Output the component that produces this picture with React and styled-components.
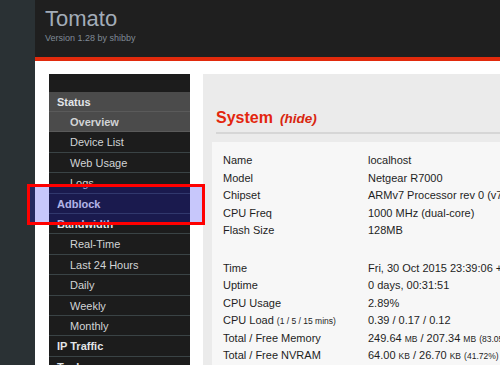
import React from "react";
import styled, { createGlobalStyle } from "styled-components";

const GlobalStyle = createGlobalStyle`
  html, body {
    margin: 0;
    padding: 0;
    background: #fff;
  }
  body {
    font-family: "Liberation Sans", Arial, sans-serif;
    width: 500px;
    height: 365px;
    overflow: hidden;
  }
`;

const Page = styled.div`
  position: relative;
  display: flex;
  width: 500px;
  height: 365px;
  overflow: hidden;
`;

const Strip = styled.div`
  width: 35px;
  flex-shrink: 0;
  background: #2a3134;
`;

const Main = styled.div`
  flex: 1;
  min-width: 0;
  display: flex;
  flex-direction: column;
`;

const Header = styled.div`
  height: 51px;
  padding: 6px 0 0 10px;
  background: #1f1f1f;
  border-bottom: 4px solid #e12a0c;
`;

const Logo = styled.div`
  font-size: 22px;
  line-height: 26px;
  color: #a2acb8;
`;

const Version = styled.div`
  font-size: 9px;
  line-height: 11px;
  margin-top: 1px;
  color: #7f8a96;
`;

const Body = styled.div`
  flex: 1;
  display: flex;
  gap: 13px;
  padding: 13px 0 0 14px;
  min-height: 0;
`;

const Menu = styled.div`
  width: 141px;
  flex-shrink: 0;
  background: #1c1c1c;
  padding-top: 17.7px;
`;

const MenuItem = styled.div`
  height: 18.4px;
  padding-top: 1px;
  line-height: 19.4px;
  border-bottom: 1px solid ${(p) => (p.$active ? "#5a5a5a" : "#3a4345")};
  background: ${(p) => (p.$active ? "#4b4b4b" : "#1c1c1c")};
  padding-left: ${(p) => (p.$sub ? "21px" : "8px")};
  font-size: 11px;
  font-weight: ${(p) => (p.$bold ? "bold" : "normal")};
  color: ${(p) => (p.$sub ? "#d2d4d6" : "#e2e5e8")};
  white-space: nowrap;
  overflow: hidden;
`;

const Panel = styled.div`
  flex: 1;
  min-width: 0;
  background: #ebebeb;
  padding: 33.7px 0 0 9px;
  overflow: hidden;
`;

const Title = styled.div`
  margin-left: 4px;
  padding-bottom: 3px;
  border-bottom: 2px solid #d6d6d6;
  font-size: 16px;
  line-height: 20px;
  font-weight: bold;
  color: #e3260e;
  white-space: nowrap;
`;

const Hide = styled.span`
  margin-left: 7px;
  font-size: 13.5px;
  font-style: italic;
  color: #d8260f;
`;

const InfoBox = styled.div`
  margin-top: 8.3px;
  background: #f7f7f7;
  padding: 10.25px 0 0 11px;
  min-height: 300px;
`;

const Group = styled.div`
  margin-bottom: 20.25px;
`;

const Row = styled.div`
  display: flex;
  height: 17.5px;
  line-height: 17.5px;
  font-size: 11px;
  color: #1e1e1e;
  white-space: nowrap;
`;

const Label = styled.div`
  width: 145px;
  flex-shrink: 0;
`;

const Value = styled.div`
  white-space: nowrap;
`;

const Small = styled.span`
  font-size: 8.5px;
`;

const Highlight = styled.div`
  position: absolute;
  left: 26.5px;
  top: 184px;
  width: 178px;
  height: 41px;
  box-sizing: border-box;
  border: 3px solid #ff0000;
  background: rgba(20, 20, 240, 0.24);
  pointer-events: none;
`;

const menu = [
  { text: "Status", bold: true, active: true },
  { text: "Overview", sub: true, bold: true, active: true },
  { text: "Device List", sub: true },
  { text: "Web Usage", sub: true },
  { text: "Logs", sub: true },
  { text: "Adblock", bold: true },
  { text: "Bandwidth", bold: true },
  { text: "Real-Time", sub: true },
  { text: "Last 24 Hours", sub: true },
  { text: "Daily", sub: true },
  { text: "Weekly", sub: true },
  { text: "Monthly", sub: true },
  { text: "IP Traffic", bold: true },
  { text: "Tools", bold: true },
];

export default function App() {
  return (
    <Page>
      <GlobalStyle />
      <Strip />
      <Main>
        <Header>
          <Logo>Tomato</Logo>
          <Version>Version 1.28 by shibby</Version>
        </Header>
        <Body>
          <Menu>
            {menu.map((m) => (
              <MenuItem
                key={m.text}
                $sub={m.sub}
                $bold={m.bold}
                $active={m.active}
              >
                {m.text}
              </MenuItem>
            ))}
          </Menu>
          <Panel>
            <Title>
              System<Hide>(hide)</Hide>
            </Title>
            <InfoBox>
              <Group>
                <Row>
                  <Label>Name</Label>
                  <Value>localhost</Value>
                </Row>
                <Row>
                  <Label>Model</Label>
                  <Value>Netgear R7000</Value>
                </Row>
                <Row>
                  <Label>Chipset</Label>
                  <Value>ARMv7 Processor rev 0 (v7l)</Value>
                </Row>
                <Row>
                  <Label>CPU Freq</Label>
                  <Value>1000 MHz (dual-core)</Value>
                </Row>
                <Row>
                  <Label>Flash Size</Label>
                  <Value>128MB</Value>
                </Row>
              </Group>
              <Group>
                <Row>
                  <Label>Time</Label>
                  <Value>Fri, 30 Oct 2015 23:39:06 +0100</Value>
                </Row>
                <Row>
                  <Label>Uptime</Label>
                  <Value>0 days, 00:31:51</Value>
                </Row>
                <Row>
                  <Label>CPU Usage</Label>
                  <Value>2.89%</Value>
                </Row>
                <Row>
                  <Label>
                    CPU Load <Small>(1 / 5 / 15 mins)</Small>
                  </Label>
                  <Value>0.39 / 0.17 / 0.12</Value>
                </Row>
                <Row>
                  <Label>Total / Free Memory</Label>
                  <Value>
                    249.64 <Small>MB</Small> / 207.34 <Small>MB</Small>{" "}
                    <Small>(83.05%)</Small>
                  </Value>
                </Row>
                <Row>
                  <Label>Total / Free NVRAM</Label>
                  <Value>
                    64.00 <Small>KB</Small> / 26.70 <Small>KB</Small>{" "}
                    <Small>(41.72%)</Small>
                  </Value>
                </Row>
              </Group>
            </InfoBox>
          </Panel>
        </Body>
      </Main>
      <Highlight />
    </Page>
  );
}
